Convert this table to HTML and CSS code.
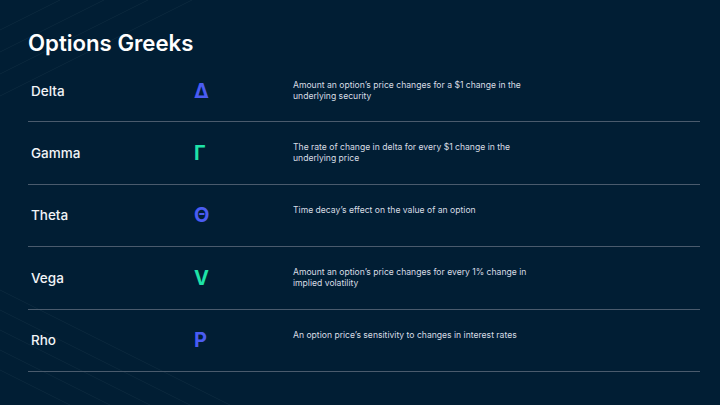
FILE: index.html
```html
<!DOCTYPE html>
<html lang="en">
<head>
<meta charset="utf-8">
<title>Options Greeks</title>
<link rel="stylesheet" href="styles.css">
</head>
<body>
<div class="slide">
  <svg class="deco" width="720" height="405" viewBox="0 0 720 405" aria-hidden="true">
    <g stroke="#ffffff" stroke-opacity="0.06" stroke-width="0.8" fill="none">
      <line x1="0" y1="30" x2="60" y2="0"/>
      <line x1="0" y1="52" x2="104" y2="0"/>
      <line x1="0" y1="74" x2="148" y2="0"/>
      <line x1="0" y1="96" x2="192" y2="0"/>
      <line x1="0" y1="310" x2="190" y2="405"/>
      <line x1="0" y1="330" x2="150" y2="405"/>
      <line x1="0" y1="350" x2="110" y2="405"/>
      <line x1="0" y1="370" x2="70" y2="405"/>
      <line x1="0" y1="290" x2="230" y2="405"/>
    </g>
  </svg>
  <h1 class="title">Options Greeks</h1>
  <div class="table">
    <div class="row">
      <div class="name">Delta</div>
      <div class="symbol blue">Δ</div>
      <div class="desc">Amount an option’s price changes for a $1 change in the underlying security</div>
    </div>
    <div class="row">
      <div class="name">Gamma</div>
      <div class="symbol green">Γ</div>
      <div class="desc">The rate of change in delta for every $1 change in the underlying price</div>
    </div>
    <div class="row">
      <div class="name">Theta</div>
      <div class="symbol blue">Θ</div>
      <div class="desc">Time decay’s effect on the value of an option</div>
    </div>
    <div class="row">
      <div class="name">Vega</div>
      <div class="symbol green">V</div>
      <div class="desc">Amount an option’s price changes for every 1% change in implied volatility</div>
    </div>
    <div class="row">
      <div class="name">Rho</div>
      <div class="symbol blue">Ρ</div>
      <div class="desc">An option price’s sensitivity to changes in interest rates</div>
    </div>
  </div>
</div>
</body>
</html>
```
FILE: styles.css
```css
* { box-sizing: border-box; }
html, body { margin: 0; padding: 0; }
body {
  background: #011e34;
  font-family: Inter, "Noto Sans", sans-serif;
  color: #f2f4f7;
}
.slide {
  position: relative;
  width: 720px;
  height: 405px;
  overflow: hidden;
  padding: 29.5px 20px 0 28px;
  background: #011e34;
}
.deco {
  position: absolute;
  left: 0;
  top: 0;
  z-index: 0;
}
.title {
  position: relative;
  margin: 0 0 4.5px 0;
  font-size: 22.2px;
  line-height: 26px;
  font-weight: 600;
  color: #ffffff;
  letter-spacing: 0;
}
.table {
  position: relative;
  display: flex;
  flex-direction: column;
}
.row {
  display: grid;
  grid-template-columns: 166px 99px 245px;
  height: 62.4px;
  border-bottom: 1.6px solid #4a5b6d;
}
.name {
  align-self: center;
  padding-left: 3px;
  font-size: 13.5px;
  font-weight: 500;
  color: #f2f4f7;
}
.symbol {
  align-self: center;
  font-size: 20px;
  font-weight: 700;
  line-height: 1;
}
.blue { color: #4a5cf2; }
.green { color: #1ee3a8; }
.desc {
  padding-top: 20px;
  font-size: 8.6px;
  line-height: 10.8px;
  color: #d8dde4;
}
```
